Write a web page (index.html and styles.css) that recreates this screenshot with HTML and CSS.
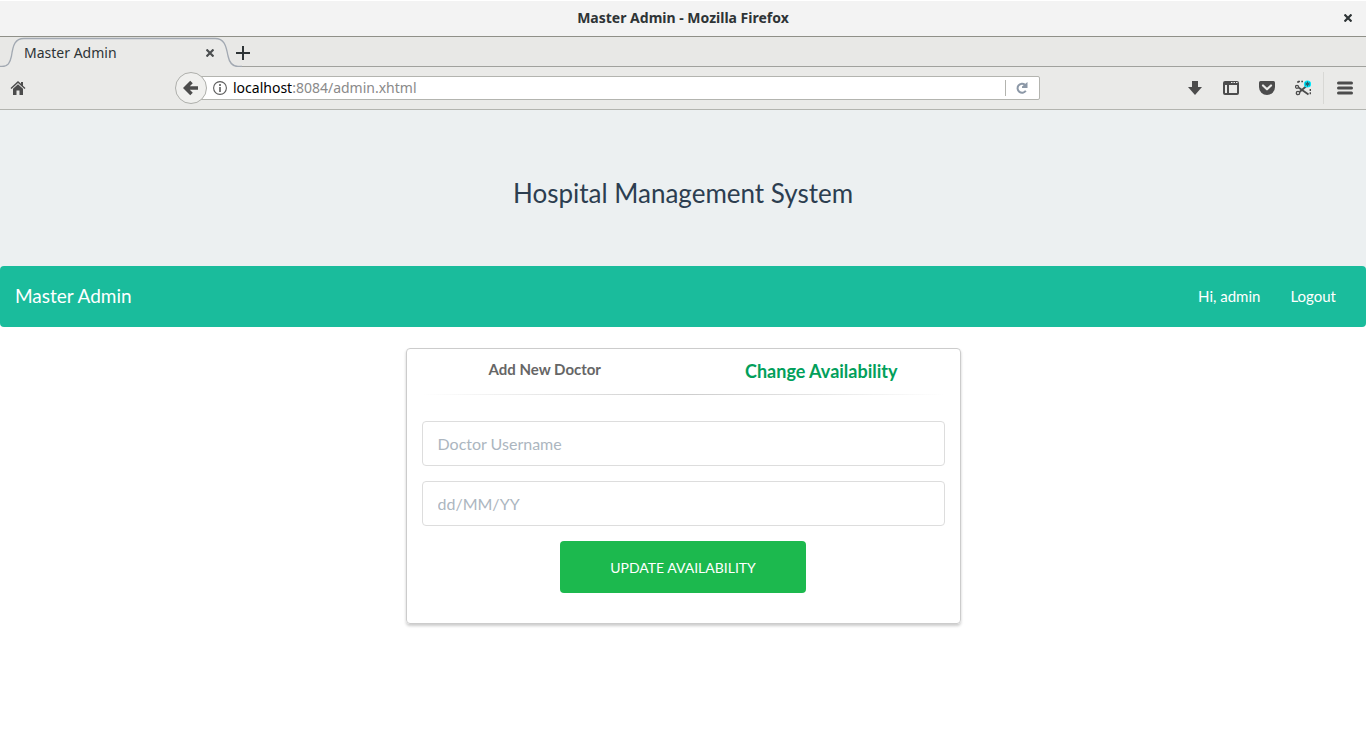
FILE: index.html
```html
<!DOCTYPE html>
<html lang="en">
<head>
<meta charset="utf-8">
<title>Master Admin</title>
<link rel="stylesheet" href="styles.css">
</head>
<body>
<div class="browser">
  <div class="titlebar">
    <span class="window-title">Master Admin - Mozilla Firefox</span>
    <button class="window-close" type="button" aria-label="Close window">
      <svg width="8" height="8" viewBox="0 0 8 8"><path d="M0.500 0.500L7.500 7.500M7.500 0.500L0.500 7.500" stroke="#2e3436" stroke-width="2.200"/></svg>
    </button>
  </div>
  <div class="tabstrip">
    <div class="tab">
      <svg class="tab-shape" width="242" height="30" viewBox="0 0 242 30">
        <path d="M0 29.500H2C8 29.500 10 26 11.500 19C13 8 15 1.500 24 1.500H215C224 1.500 226 8 228 19C229.500 26 232 29.500 238 29.500H242V30H0Z" fill="#eaeae8"/>
        <path d="M0 29.500H2C8 29.500 10 26 11.500 19C13 8 15 1.500 24 1.500H215C224 1.500 226 8 228 19C229.500 26 232 29.500 238 29.500H242" fill="none" stroke="#a2a9b2" stroke-width="1.300"/>
      </svg>
      <span class="tab-label">Master Admin</span>
      <button class="tab-close" type="button" aria-label="Close tab">
        <svg width="8" height="8" viewBox="0 0 8 8"><path d="M0.500 0.500L7.500 7.500M7.500 0.500L0.500 7.500" stroke="#4c4f50" stroke-width="2.200"/></svg>
      </button>
    </div>
    <button class="new-tab" type="button" aria-label="New tab">
      <svg width="14" height="14" viewBox="0 0 14 14"><path d="M7 0V14M0 7H14" stroke="#2e3436" stroke-width="2"/></svg>
    </button>
  </div>
  <div class="toolbar">
    <button class="tool" type="button" aria-label="Home">
      <svg width="16" height="16" viewBox="0 0 16 16" fill="#4c4c4c"><path d="M8 1L0.500 8L1.500 9L8 3L14.500 9L15.500 8L13 5.700V2H11V3.800Z"/><path d="M8 4.200L3 8.800V15H6.500V10.500H9.500V15H13V8.800Z"/></svg>
    </button>
    <div class="location">
      <button class="back" type="button" aria-label="Back">
        <svg width="16" height="16" viewBox="0 0 16 16"><path d="M8.500 2L2.500 8L8.500 14M3 8H15" fill="none" stroke="#4c4c4c" stroke-width="3.600"/></svg>
      </button>
      <div class="urlbar">
        <svg width="14" height="14" viewBox="0 0 14 14"><circle cx="7" cy="7" r="6.400" fill="none" stroke="#5c5c5c" stroke-width="1.100"/><path d="M7 6V11M7 3V5" stroke="#5c5c5c" stroke-width="1.600"/></svg>
        <span class="url"><span class="host">localhost</span>:8084/admin.xhtml</span>
        <button class="reload" type="button" aria-label="Reload">
          <svg width="12" height="12" viewBox="0 0 12 12"><path d="M9 2.800A4.500 4.500 0 1 0 9.800 8.800" fill="none" stroke="#8c98a7" stroke-width="2"/><path d="M11.500 0V6H6V4.500Z" fill="#8c98a7"/></svg>
        </button>
      </div>
    </div>
    <div class="tools">
      <button class="tool" type="button" aria-label="Downloads">
        <svg width="16" height="16" viewBox="0 0 16 16"><path d="M5 1H11V7H15L8 15L1 7H5Z" fill="#4c4c4c"/></svg>
      </button>
      <button class="tool" type="button" aria-label="Sidebar">
        <svg width="16" height="16" viewBox="0 0 16 16"><path fill-rule="evenodd" d="M2 1H14Q16 1 16 3V13Q16 15 14 15H2Q0 15 0 13V3Q0 1 2 1ZM2 5V13H4V5ZM6 5V13H14V5ZM8 2V3H9.500V2ZM10.500 2V3H12V2ZM13 2V3H14.500V2Z" fill="#4c4c4c"/></svg>
      </button>
      <button class="tool" type="button" aria-label="Save to Pocket">
        <svg width="16" height="16" viewBox="0 0 16 16"><path d="M1.500 1H14.500Q16 1 16 2.500V7A8 8 0 0 1 0 7V2.500Q0 1 1.500 1Z" fill="#4c4c4c"/><path d="M4 5.500L8 9.300L12 5.500" fill="none" stroke="#eaeae8" stroke-width="2.200" stroke-linecap="round" stroke-linejoin="round"/></svg>
      </button>
      <button class="tool" type="button" aria-label="Screenshot">
        <svg width="16" height="16" viewBox="0 0 16 16"><g fill="none" stroke="#4c4c4c"><circle cx="2" cy="6.800" r="1.500" stroke-width="1.300"/><circle cx="3" cy="13" r="1.700" stroke-width="1.300"/><path d="M3.500 7.500L13.500 14.500M4.500 12L11.500 6" stroke-width="1.800"/><path d="M3 1.500H8M15.300 9V15M3 3V1" stroke-width="1.400" stroke-dasharray="2 1.300"/></g><circle cx="12.500" cy="4" r="3.600" fill="#00eaff"/><path d="M12.500 1.500V6.500M10.300 2.800L14.700 5.200M14.700 2.800L10.300 5.200" stroke="#245c68" stroke-width="1.100"/></svg>
      </button>
    </div>
    <button class="tool menu" type="button" aria-label="Menu">
      <svg width="16" height="16" viewBox="0 0 16 16"><path d="M1.500 3H14.500M1.500 8H14.500M1.500 13H14.500" stroke="#4c4c4c" stroke-width="3" stroke-linecap="round"/></svg>
    </button>
  </div>
</div>
<header class="hero">
  <h1 class="hero-title">Hospital Management System</h1>
</header>
<div class="nav-wrap">
  <nav class="navbar">
    <a class="brand" href="#">Master Admin</a>
    <div class="nav-links">
      <a href="#">Hi, admin</a>
      <a href="#">Logout</a>
    </div>
  </nav>
</div>
<main class="panel">
  <div class="panel-tabs">
    <a class="panel-tab" href="#">Add New Doctor</a>
    <a class="panel-tab active" href="#">Change Availability</a>
  </div>
  <hr class="divider">
  <form class="form">
    <input class="field" type="text" placeholder="Doctor Username" aria-label="Doctor Username">
    <input class="field" type="text" placeholder="dd/MM/YY" aria-label="Date">
    <button class="submit" type="button">UPDATE AVAILABILITY</button>
  </form>
</main>
</body>
</html>
```
FILE: styles.css
```css
* {
  box-sizing: border-box;
}

body {
  margin: 0;
  background: #fff;
  font-family: Lato, sans-serif;
  font-size: 15px;
  color: #2c3e50;
}

button {
  padding: 0;
  border: 0;
  background: none;
  font-family: inherit;
}

a {
  text-decoration: none;
}

svg {
  display: block;
  flex: none;
}

.browser {
  font-family: "Noto Sans", sans-serif;
  font-size: 14px;
  line-height: 20px;
  color: #2e3436;
}

.titlebar {
  display: grid;
  grid-template-columns: 1fr auto 1fr;
  align-items: center;
  height: 37px;
  padding: 0 14px 2px;
  background: #f3f3f3;
  border-top: 1px solid #fff;
  border-bottom: 1px solid #8f9088;
}

.window-title {
  grid-column: 2;
  font-weight: 700;
}

.window-close {
  justify-self: end;
}

.tabstrip {
  display: flex;
  align-items: center;
  height: 30px;
  background: linear-gradient(#e8e8e6 29px, #a0a19d 29px);
}

.tab {
  position: relative;
  display: flex;
  align-items: center;
  justify-content: space-between;
  width: 236px;
  height: 30px;
  padding: 2px 22px 0 24px;
}

.new-tab {
  padding-top: 2px;
}

.tab-shape {
  position: absolute;
  left: 0;
  top: 0;
}

.tab-label,
.tab-close {
  position: relative;
}

.toolbar {
  display: flex;
  align-items: center;
  height: 43px;
  padding: 0 13px 0 10px;
  background: #eaeae8;
  border-bottom: 1px solid #b3b4af;
}

.location {
  display: flex;
  flex: 1;
  align-items: center;
  margin: 0 147px 0 149px;
}

.back {
  position: relative;
  display: grid;
  place-items: center;
  width: 32px;
  height: 32px;
  background: #f0f0ee;
  border: 1px solid #aeafab;
  border-radius: 50%;
}

.urlbar {
  display: flex;
  flex: 1;
  align-items: center;
  gap: 6px;
  height: 24px;
  margin-left: -12px;
  padding: 0 11px 0 17px;
  background: #fff;
  border: 1px solid #b3b4af;
  border-radius: 2px;
}

.url {
  flex: 1;
  color: #8a8a8a;
}

.host {
  color: #000;
}

.reload {
  padding: 2px 0 2px 10px;
  border-left: 1px solid #b3b4af;
}

.tools {
  display: flex;
  align-items: center;
  gap: 20px;
  padding-right: 12px;
}

.tool {
  display: grid;
  place-items: center;
  width: 16px;
  height: 32px;
}

.menu {
  width: 30px;
  padding-left: 12px;
  border-left: 1px solid #d8d8d5;
}

.hero {
  padding: 65px 15px 55px;
  background: #ecf0f1;
  text-align: center;
}

.hero-title {
  margin: 0;
  font-size: 26px;
  font-weight: 400;
  line-height: 36px;
}

.nav-wrap {
  background: linear-gradient(#ecf0f1 50%, #fff 50%);
}

.navbar {
  display: flex;
  align-items: center;
  justify-content: space-between;
  min-height: 61px;
  padding: 0 30px 2px 15px;
  background: #1abc9c;
  border-radius: 4px;
}

.navbar a {
  color: #fff;
}

.brand {
  font-size: 19px;
}

.nav-links {
  display: flex;
  gap: 30px;
}

.panel {
  width: calc(100% - 30px);
  max-width: 555px;
  margin: 21px auto;
  padding: 0 15px 30px;
  border: 1px solid #ccc;
  border-radius: 4px;
  box-shadow: 0 2px 3px rgba(0, 0, 0, 0.2);
}

.panel-tabs {
  display: grid;
  grid-template-columns: 1fr 1fr;
  gap: 30px;
  height: 45px;
  padding-top: 10px;
  text-align: center;
}

.panel-tab {
  color: #666;
  font-weight: 700;
  line-height: 20px;
}

.panel-tab.active {
  color: #029f5b;
  font-size: 18px;
  line-height: 24px;
}

.divider {
  height: 1px;
  margin: 0 0 26px;
  border: 0;
  background: linear-gradient(to right, transparent, #ccc, transparent);
}

.form {
  display: flex;
  flex-direction: column;
  gap: 15px;
}

.field {
  width: 100%;
  height: 45px;
  padding: 0 15px;
  border: 1px solid #ddd;
  border-radius: 4px;
  background: #fff;
  font-family: inherit;
  font-size: 16px;
  color: #2c3e50;
}

.field::placeholder {
  color: #acb6c0;
  opacity: 1;
}

.submit {
  align-self: center;
  width: 47%;
  height: 52px;
  background: #1cb94e;
  border-radius: 4px;
  color: #fff;
  font-size: 14px;
}
```
